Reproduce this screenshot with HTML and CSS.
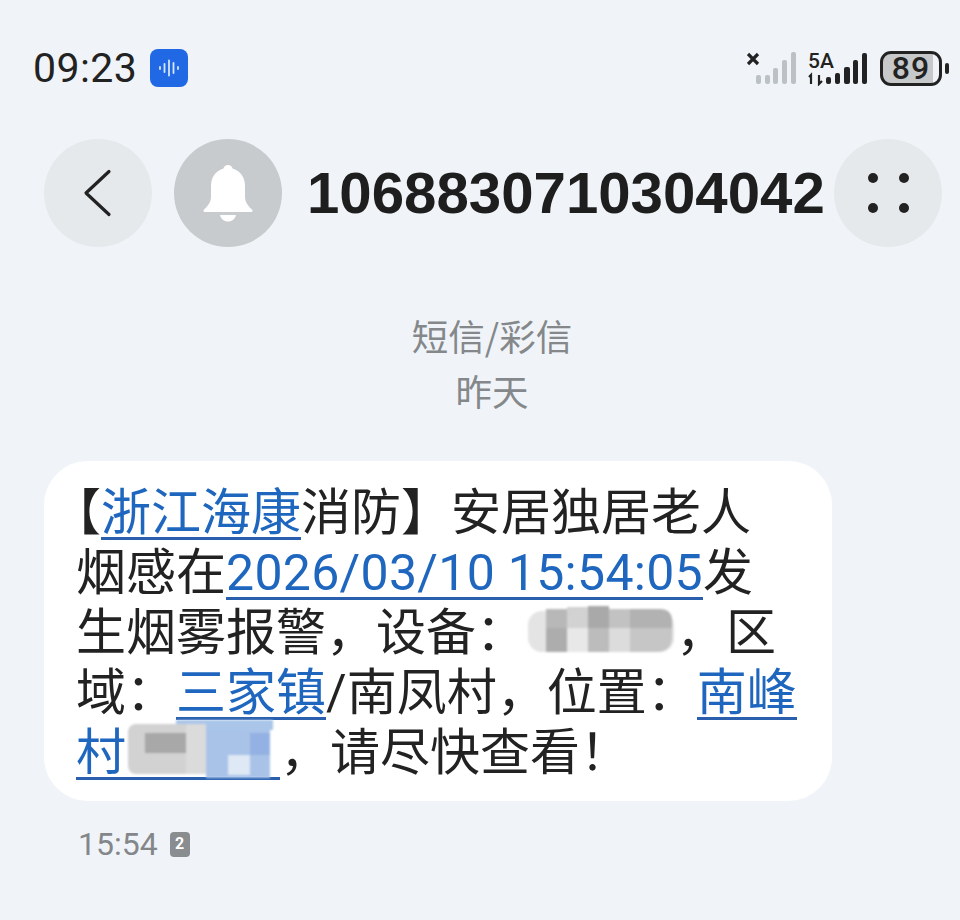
FILE: index.html
```html
<!DOCTYPE html>
<html lang="zh-CN">
<head>
	<meta charset="UTF-8">
	<title>短信</title>
	<link rel="stylesheet" href="styles.css">
</head>
<body>
	<div class="status">
		<div class="status-left">
			<span class="clock">09:23</span>
			<span class="voice">
				<svg width="24" height="18" viewBox="0 0 24 18"><g stroke="#d5e6ff" stroke-width="1.8" stroke-linecap="round"><path d="M3 8v2M7.500 5v8M12 1.500v15M16.500 4v10M21 8v2"/></g></svg>
			</span>
		</div>
		<div class="status-right">
			<svg class="sig" width="49" height="36" viewBox="0 0 49 36">
				<path d="M1 4l10 10M11 4L1 14" stroke="#222" stroke-width="3.2"/>
				<g fill="#bcc1c5"><rect x="9" y="25" width="5" height="9" rx="2"/><rect x="18" y="25" width="5" height="9" rx="2"/><rect x="26" y="18" width="5" height="16" rx="2"/><rect x="35" y="10" width="5" height="24" rx="2"/><rect x="44" y="2" width="5" height="32" rx="2"/></g>
			</svg>
			<svg class="sig" width="60" height="36" viewBox="0 0 60 36">
				<text class="sig-text" x="0" y="18">5A</text>
				<path d="M3 34v-9l-2 2M11 25v9l3-3" fill="none" stroke="#222" stroke-width="2.200"/>
				<g fill="#222"><rect x="18" y="27" width="5" height="7" rx="2"/><rect x="27" y="23" width="5" height="11" rx="2"/><rect x="36" y="17" width="6" height="17" rx="2"/><rect x="45" y="10" width="5" height="24" rx="2"/><rect x="54" y="3" width="5" height="31" rx="2"/></g>
			</svg>
			<div class="battery"><span class="battery-num">89</span></div>
			<span class="battery-tip"></span>
		</div>
	</div>

	<div class="head">
		<div class="round round-light">
			<svg width="32" height="50" viewBox="0 0 32 50"><path d="M27 3.500L4 25l23 21.500" fill="none" stroke="#222" stroke-width="3.200" stroke-linecap="round" stroke-linejoin="round"/></svg>
		</div>
		<div class="round round-dark">
			<svg width="52" height="60" viewBox="0 0 52 60"><path d="M26 2c-2.500 0-4 1.500-4.500 3.500C13 8 9 15 9 23v11c0 5-3 9-7 12.500-1 1-.5 2.500 1 2.500h46c1.500 0 2-1.500 1-2.500C46 43 43 39 43 34V23c0-8-4-15-12.500-17.500C30 3.500 28.500 2 26 2z" fill="#fff"/><path d="M18 52h16c-1 4-4 6.500-8 6.500S19 56 18 52z" fill="#fff"/></svg>
		</div>
		<div class="number">1068830710304042</div>
		<div class="round round-light dots"><i></i><i></i><i></i><i></i></div>
	</div>

	<div class="meta">
		<div class="meta-type">短信/彩信</div>
		<div class="meta-day">昨天</div>
	</div>

	<div class="bubble">
		<div class="line"><span class="bracket">【</span><a>浙江海康</a>消防】安居独居老人</div>
		<div class="line">烟感在<a class="date">2026/03/10 15:54:05</a>发</div>
		<div class="line">生烟雾报警，设备：<svg class="mosaic" width="150" height="60" viewBox="0 0 150 60">
			<rect x="2" y="8" width="146" height="41" rx="14" fill="#e4e4e4"/>
			<rect x="20" y="6" width="21" height="19" fill="#b8b8b8"/><rect x="20" y="25" width="21" height="24" fill="#adadad"/>
			<rect x="41" y="4" width="21" height="21" fill="#d2d2d2"/><rect x="41" y="25" width="21" height="24" fill="#e8e8e8"/>
			<rect x="62" y="3" width="21" height="22" fill="#a9a9a9"/><rect x="62" y="25" width="21" height="24" fill="#bcbcbc"/>
			<rect x="83" y="6" width="21" height="19" fill="#c2c2c2"/><rect x="83" y="25" width="21" height="24" fill="#dcdcdc"/>
			<path d="M104 6h30q12 0 12 12v7h-42z" fill="#b2b2b2"/><path d="M104 25h42v8q0 16-16 16h-26z" fill="#c6c6c6"/>
		</svg>，区</div>
		<div class="line">域：<a>三家镇</a>/南凤村，位置：<a>南峰</a></div>
		<div class="line"><a>村<svg class="mosaic" width="154" height="60" viewBox="0 0 154 60">
			<rect x="50" y="-3" width="97" height="10" fill="#a9c6e9"/>
			<rect x="2" y="1" width="78" height="50" rx="8" fill="#d2d2d2"/>
			<rect x="19" y="10" width="41" height="20" fill="#a8a8a8"/>
			<rect x="60" y="1" width="20" height="50" fill="#dbdbdb"/>
			<rect x="80" y="7" width="64" height="48" fill="#a9c3e8"/>
			<rect x="124" y="10" width="20" height="22" fill="#93b1e2"/>
			<rect x="102" y="32" width="22" height="20" fill="#dfe8f5"/>
		</svg></a>，请尽快查看！</div>
	</div>

	<div class="foot">
		<span class="foot-time">15:54</span>
		<span class="sim">2</span>
	</div>
</body>
</html>
```
FILE: styles.css
```css
*{margin:0; padding:0; box-sizing:border-box;}
html,body{height:920px; overflow:hidden;}
body{background:#f0f4f8; color:#222; font-family:"Noto Sans CJK SC","Noto Sans",sans-serif;}

.status{display:flex; justify-content:space-between; align-items:center; height:52px; margin-top:42px; padding:0 11px 0 33px;}
.status-left{display:flex; align-items:center;}
.clock{width:117px; font:41px/52px Roboto,"Noto Sans",sans-serif; letter-spacing:.4px; color:#222;}
.voice{display:flex; align-items:center; justify-content:center; width:38px; height:38px; border-radius:8px; background:#2169e4;}
.status-right{display:flex; align-items:center;}
.sig{flex:none; margin-right:12px;}
.sig-text{font:500 21px Roboto,sans-serif; fill:#222;}
.battery{display:flex; align-items:center; justify-content:center; width:62px; height:35px; border:3px solid #222; border-radius:11px; background:linear-gradient(90deg,#c6c8ca 89%,#f0f4f8 89%);}
.battery-num{font:500 32px/30px Roboto,sans-serif; letter-spacing:1px;}
.battery-tip{width:4px; height:11px; margin-left:3px; border-radius:2px; background:#222;}

.head{display:flex; align-items:center; height:108px; margin-top:45px; padding-left:44px;}
.round{display:flex; align-items:center; justify-content:center; flex:none; width:108px; height:108px; border-radius:50%;}
.round-light{background:#e6e9ec;}
.round-dark{margin-left:22px; background:#c8cbce;}
.number{flex:none; width:527px; margin-left:25px; font:700 58.2px/108px "Liberation Sans",Roboto,sans-serif; white-space:nowrap; color:#1e1e1e;}
.dots{display:grid; grid-template-columns:10px 10px; gap:20px 21px; align-content:center; justify-content:center;}
.dots i{width:10px; height:10px; border-radius:50%; background:#222;}

.meta{margin-top:61px; padding-left:24px; text-align:center; font-size:36.5px; color:#85888b;}
.meta-type{line-height:56px;}
.meta-day{line-height:54px;}

.bubble{width:788px; height:340px; margin:43px 0 0 44px; padding:22px 0 0 32px; background:#fff; border-radius:44px; font:50px Roboto,"Noto Sans CJK SC",sans-serif; color:#222;}
.line{height:60px; line-height:60px; white-space:nowrap;}
.line a{display:inline-block; height:60px; vertical-align:top; color:#1f66bf; background:linear-gradient(#2a5fae,#2a5fae) no-repeat 0 54px/100% 3px;}
.date{letter-spacing:.3px;}
.bracket{display:inline-block; margin-left:-25px;}
.mosaic{display:inline-block; vertical-align:top; overflow:visible; filter:blur(.8px);}

.foot{display:flex; align-items:center; gap:12px; margin:23px 0 0 78px; height:40px;}
.foot-time{font:32px/40px Roboto,sans-serif; color:#84878a;}
.sim{display:flex; align-items:center; justify-content:center; width:20px; height:25px; border-radius:4px; background:#8a8d90; color:#fff; font:700 16px/1 Roboto,sans-serif;}
```
